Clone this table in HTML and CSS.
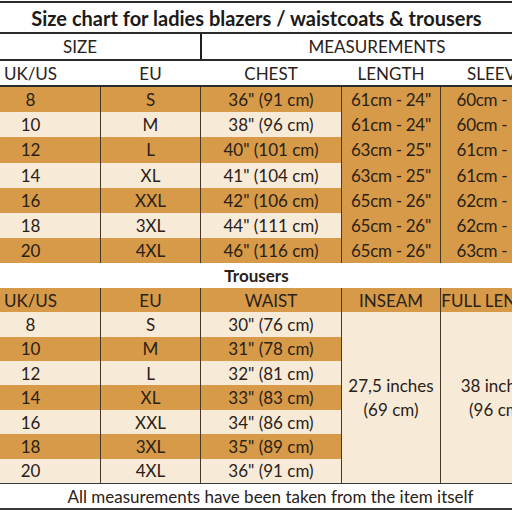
FILE: index.html
```html
<!DOCTYPE html>
<html>
<head>
<meta charset="utf-8">
<title>Size chart</title>
<link rel="stylesheet" href="styles.css">
</head>
<body>
<div class="sheet">
<table class="chart">
	<colgroup>
		<col class="c-uk">
		<col class="c-eu">
		<col class="c-chest">
		<col class="c-length">
		<col class="c-sleeve">
	</colgroup>
	<tr class="title"><td colspan="5">Size chart for ladies blazers / waistcoats &amp; trousers</td></tr>
	<tr class="group">
		<td colspan="2" class="split">SIZE</td>
		<td colspan="3">MEASUREMENTS</td>
	</tr>
	<tr class="head">
		<td>UK/US</td><td>EU</td><td>CHEST</td><td>LENGTH</td><td>SLEEVE</td>
	</tr>
	<tr class="row dark"><td>8</td><td>S</td><td>36" (91 cm)</td><td class="fix">61cm - 24"</td><td class="fix">60cm - 23"</td></tr>
	<tr class="row light"><td>10</td><td>M</td><td>38" (96 cm)</td><td class="fix">61cm - 24"</td><td class="fix">60cm - 23"</td></tr>
	<tr class="row dark"><td>12</td><td>L</td><td>40" (101 cm)</td><td class="fix">63cm - 25"</td><td class="fix">61cm - 24"</td></tr>
	<tr class="row light"><td>14</td><td>XL</td><td>41" (104 cm)</td><td class="fix">63cm - 25"</td><td class="fix">61cm - 24"</td></tr>
	<tr class="row dark"><td>16</td><td>XXL</td><td>42" (106 cm)</td><td class="fix">65cm - 26"</td><td class="fix">62cm - 24"</td></tr>
	<tr class="row light"><td>18</td><td>3XL</td><td>44" (111 cm)</td><td class="fix">65cm - 26"</td><td class="fix">62cm - 24"</td></tr>
	<tr class="row dark"><td>20</td><td>4XL</td><td>46" (116 cm)</td><td class="fix">65cm - 26"</td><td class="fix">63cm - 25"</td></tr>

	<tr class="sub"><td colspan="5">Trousers</td></tr>
	<tr class="row dark thead">
		<td>UK/US</td><td>EU</td><td>WAIST</td><td>INSEAM</td><td>FULL LENGTH</td>
	</tr>
	<tr class="row tr light">
		<td>8</td><td>S</td><td>30" (76 cm)</td>
		<td rowspan="7" class="merged">27,5 inches<br>(69 cm)</td>
		<td rowspan="7" class="merged">38 inches<br>(96 cm)</td>
	</tr>
	<tr class="row tr dark"><td>10</td><td>M</td><td>31" (78 cm)</td></tr>
	<tr class="row tr light"><td>12</td><td>L</td><td>32" (81 cm)</td></tr>
	<tr class="row tr dark"><td>14</td><td>XL</td><td>33" (83 cm)</td></tr>
	<tr class="row tr light"><td>16</td><td>XXL</td><td>34" (86 cm)</td></tr>
	<tr class="row tr dark"><td>18</td><td>3XL</td><td>35" (89 cm)</td></tr>
	<tr class="row tr light"><td>20</td><td>4XL</td><td>36" (91 cm)</td></tr>

	<tr class="foot"><td colspan="5">All measurements have been taken from the item itself</td></tr>
</table>
</div>
</body>
</html>
```

FILE: styles.css
```css
html, body {
	margin: 0;
	padding: 0;
	overflow: hidden;
	background: #ffffff;
}
.sheet {
	padding-top: 1px;
	margin-left: -40px;
	width: 592px;
}
.chart {
	width: 592px;
	table-layout: fixed;
	border-collapse: collapse;
	font-family: Lato, "Open Sans", sans-serif;
	font-size: 17px;
	color: #2a2118;
	text-align: center;
}
.c-uk { width: 140px; }
.c-eu { width: 100px; }
.c-chest { width: 141px; }
.c-length { width: 99px; }
.c-sleeve { width: 112px; }

.chart td {
	padding: 0;
	white-space: nowrap;
	overflow: hidden;
}

.title td {
	height: 29px;
	font-weight: bold;
	font-size: 20px;
	color: #1c1a18;
	border-top: 2px solid #2b2b2b;
	border-bottom: 2px solid #2b2b2b;
}
.group td {
	height: 25px;
	border-bottom: 2px solid #2b2b2b;
}
.group .split {
	border-right: 2px solid #1e1e1e;
}
.head td {
	height: 24px;
	border-bottom: 2px solid #2b2b2b;
}

.row td {
	height: 25.2px;
	border-left: 1px solid #4a3826;
	border-right: 1px solid #4a3826;
}
.row.tr td {
	height: 24.4px;
}
.dark td {
	background: #d69a48;
}
.light td {
	background: #f7ebd8;
}
.row td.fix {
	background: #d69a48;
	letter-spacing: -0.3px;
}
.row td.merged {
	background: #f7ebd8;
	line-height: 24px;
	vertical-align: middle;
}

.sub td {
	height: 25px;
	font-weight: bold;
	background: #ffffff;
}
.row.thead td {
	height: 24px;
}

.foot td {
	height: 24px;
	padding-left: 28px;
	border-top: 1px solid #3a3a3a;
	border-bottom: 2px solid #3a3a3a;
	background: #ffffff;
}
```
